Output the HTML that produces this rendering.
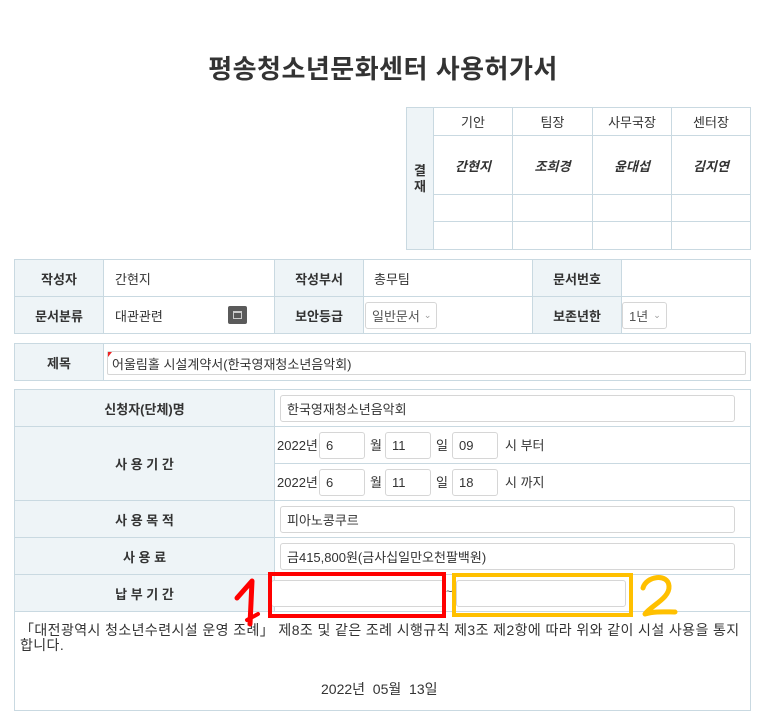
<!DOCTYPE html>
<html><head><meta charset="utf-8"><style>
*{box-sizing:border-box;margin:0;padding:0}
body{width:760px;height:701px;overflow:hidden;background:#fff;font-family:"Liberation Sans","Noto Sans CJK KR",sans-serif;font-size:13px;color:#333;position:relative}
.a{position:absolute}
.c{position:absolute;border:1px solid #c9d9e1;display:flex;align-items:center}
.l{background:#eef4f7;justify-content:center;font-weight:bold}
.in{position:absolute;border:1px solid #d6d6d6;border-radius:3px;background:#fff;font-size:13px;display:flex;align-items:center;padding-left:6px}
</style></head><body>
<div class="a" style="left:0;width:766px;top:49px;text-align:center;font-size:26px;font-weight:bold;color:#333;letter-spacing:0.5px">평송청소년문화센터 사용허가서</div>

<div class="c l" style="left:406px;top:107px;width:28px;height:143px;flex-direction:column;font-size:13px;line-height:16px">결<br>재</div>
<div class="c" style="left:433px;top:107px;width:80px;height:29px;justify-content:center">기안</div>
<div class="c" style="left:512px;top:107px;width:81px;height:29px;justify-content:center">팀장</div>
<div class="c" style="left:592px;top:107px;width:80px;height:29px;justify-content:center">사무국장</div>
<div class="c" style="left:671px;top:107px;width:80px;height:29px;justify-content:center">센터장</div>
<div class="c" style="left:433px;top:135px;width:80px;height:60px;justify-content:center;font-style:italic;font-weight:bold">간현지</div>
<div class="c" style="left:512px;top:135px;width:81px;height:60px;justify-content:center;font-style:italic;font-weight:bold">조희경</div>
<div class="c" style="left:592px;top:135px;width:80px;height:60px;justify-content:center;font-style:italic;font-weight:bold">윤대섭</div>
<div class="c" style="left:671px;top:135px;width:80px;height:60px;justify-content:center;font-style:italic;font-weight:bold">김지연</div>
<div class="c" style="left:433px;top:194px;width:80px;height:28px"></div>
<div class="c" style="left:512px;top:194px;width:81px;height:28px"></div>
<div class="c" style="left:592px;top:194px;width:80px;height:28px"></div>
<div class="c" style="left:671px;top:194px;width:80px;height:28px"></div>
<div class="c" style="left:433px;top:221px;width:80px;height:29px"></div>
<div class="c" style="left:512px;top:221px;width:81px;height:29px"></div>
<div class="c" style="left:592px;top:221px;width:80px;height:29px"></div>
<div class="c" style="left:671px;top:221px;width:80px;height:29px"></div>

<div class="c l" style="left:14px;top:259px;width:90px;height:38px">작성자</div>
<div class="c" style="left:103px;top:259px;width:172px;height:38px;padding-left:11px">간현지</div>
<div class="c l" style="left:274px;top:259px;width:90px;height:38px">작성부서</div>
<div class="c" style="left:363px;top:259px;width:170px;height:38px;padding-left:10px">총무팀</div>
<div class="c l" style="left:532px;top:259px;width:90px;height:38px">문서번호</div>
<div class="c" style="left:621px;top:259px;width:130px;height:38px"></div>
<div class="c l" style="left:14px;top:296px;width:90px;height:38px">문서분류</div>
<div class="c" style="left:103px;top:296px;width:172px;height:38px;padding-left:11px">대관관련</div>
<div class="a" style="left:228px;top:306px;width:19px;height:18px;background:#5a5a5a;border-radius:2px"><div style="position:absolute;left:5px;top:5px;width:9px;height:8px;border:1px solid #ccc;border-top-width:2px"></div></div>
<div class="c l" style="left:274px;top:296px;width:90px;height:38px">보안등급</div>
<div class="c" style="left:363px;top:296px;width:170px;height:38px"></div>
<div class="in" style="left:365px;top:302px;width:72px;height:27px;color:#555">일반문서 <span style="font-size:9px;color:#999;margin-left:4px">⌄</span></div>
<div class="c l" style="left:532px;top:296px;width:90px;height:38px">보존년한</div>
<div class="c" style="left:621px;top:296px;width:130px;height:38px"></div>
<div class="in" style="left:622px;top:302px;width:45px;height:27px;color:#555">1년 <span style="font-size:9px;color:#999;margin-left:5px">⌄</span></div>

<div class="c l" style="left:14px;top:343px;width:90px;height:38px">제목</div>
<div class="c" style="left:103px;top:343px;width:648px;height:38px"></div>
<div class="in" style="left:107px;top:351px;width:639px;height:24px;padding-left:4px;border-radius:2px">어울림홀 시설계약서(한국영재청소년음악회)</div>
<div class="a" style="left:108px;top:352px;width:0;height:0;border-top:5px solid #e22;border-right:4px solid transparent"></div>

<div class="c l" style="left:14px;top:389px;width:261px;height:38px">신청자(단체)명</div>
<div class="c" style="left:274px;top:389px;width:477px;height:38px"></div>
<div class="in" style="left:280px;top:395px;width:455px;height:27px">한국영재청소년음악회</div>
<div class="c l" style="left:14px;top:426px;width:261px;height:75px">사 용 기 간</div>
<div class="c" style="left:274px;top:426px;width:477px;height:38px"></div>
<div class="c" style="left:274px;top:463px;width:477px;height:38px"></div>
<div class="a" style="left:277px;top:435px">2022년</div>
<div class="in" style="left:319px;top:432px;width:46px;height:27px">6</div>
<div class="a" style="left:370px;top:435px">월</div>
<div class="in" style="left:385px;top:432px;width:46px;height:27px">11</div>
<div class="a" style="left:436px;top:435px">일</div>
<div class="in" style="left:452px;top:432px;width:46px;height:27px">09</div>
<div class="a" style="left:505px;top:435px">시 부터</div>
<div class="a" style="left:277px;top:472px">2022년</div>
<div class="in" style="left:319px;top:469px;width:46px;height:27px">6</div>
<div class="a" style="left:370px;top:472px">월</div>
<div class="in" style="left:385px;top:469px;width:46px;height:27px">11</div>
<div class="a" style="left:436px;top:472px">일</div>
<div class="in" style="left:452px;top:469px;width:46px;height:27px">18</div>
<div class="a" style="left:505px;top:472px">시 까지</div>
<div class="c l" style="left:14px;top:500px;width:261px;height:38px">사 용 목 적</div>
<div class="c" style="left:274px;top:500px;width:477px;height:38px"></div>
<div class="in" style="left:280px;top:506px;width:455px;height:27px">피아노콩쿠르</div>
<div class="c l" style="left:14px;top:537px;width:261px;height:38px">사 용 료</div>
<div class="c" style="left:274px;top:537px;width:477px;height:38px"></div>
<div class="in" style="left:280px;top:543px;width:455px;height:27px">금415,800원(금사십일만오천팔백원)</div>
<div class="c l" style="left:14px;top:574px;width:261px;height:38px">납 부 기 간</div>
<div class="c" style="left:274px;top:574px;width:477px;height:38px"></div>
<div class="in" style="left:271px;top:580px;width:173px;height:27px"></div>
<div class="a" style="left:446px;top:586px;font-size:11px">~</div>
<div class="in" style="left:456px;top:580px;width:170px;height:27px"></div>
<div class="c" style="left:14px;top:611px;width:737px;height:100px;align-items:flex-start"></div>
<div class="a" style="left:20px;top:623px;width:720px;font-size:14px;line-height:15px;letter-spacing:0.4px">「대전광역시 청소년수련시설 운영 조례」 제8조 및 같은 조례 시행규칙 제3조 제2항에 따라 위와 같이 시설 사용을 통지합니다.</div>
<div class="a" style="left:321px;top:679px;font-size:14px">2022년 &nbsp;05월 &nbsp;13일</div>

<div class="a" style="left:268px;top:572px;width:178px;height:46px;border:4px solid #f00"></div>
<div class="a" style="left:452px;top:573px;width:181px;height:44px;border:4px solid #ffc000"></div>
<svg class="a" style="left:0;top:0" width="760" height="701">
<path d="M237 598 L252 581 L251 603 L250 624" fill="none" stroke="#f00" stroke-width="5" stroke-linecap="round" stroke-linejoin="round"/>
<path d="M247 620 L258 614" fill="none" stroke="#f00" stroke-width="4" stroke-linecap="round"/>
<path d="M643 588 C646 576 668 573 669 586 C670 598 652 605 645 614 C655 611 666 612 675 612" fill="none" stroke="#ffc000" stroke-width="5" stroke-linecap="round" stroke-linejoin="round"/>
</svg>
</body></html>
